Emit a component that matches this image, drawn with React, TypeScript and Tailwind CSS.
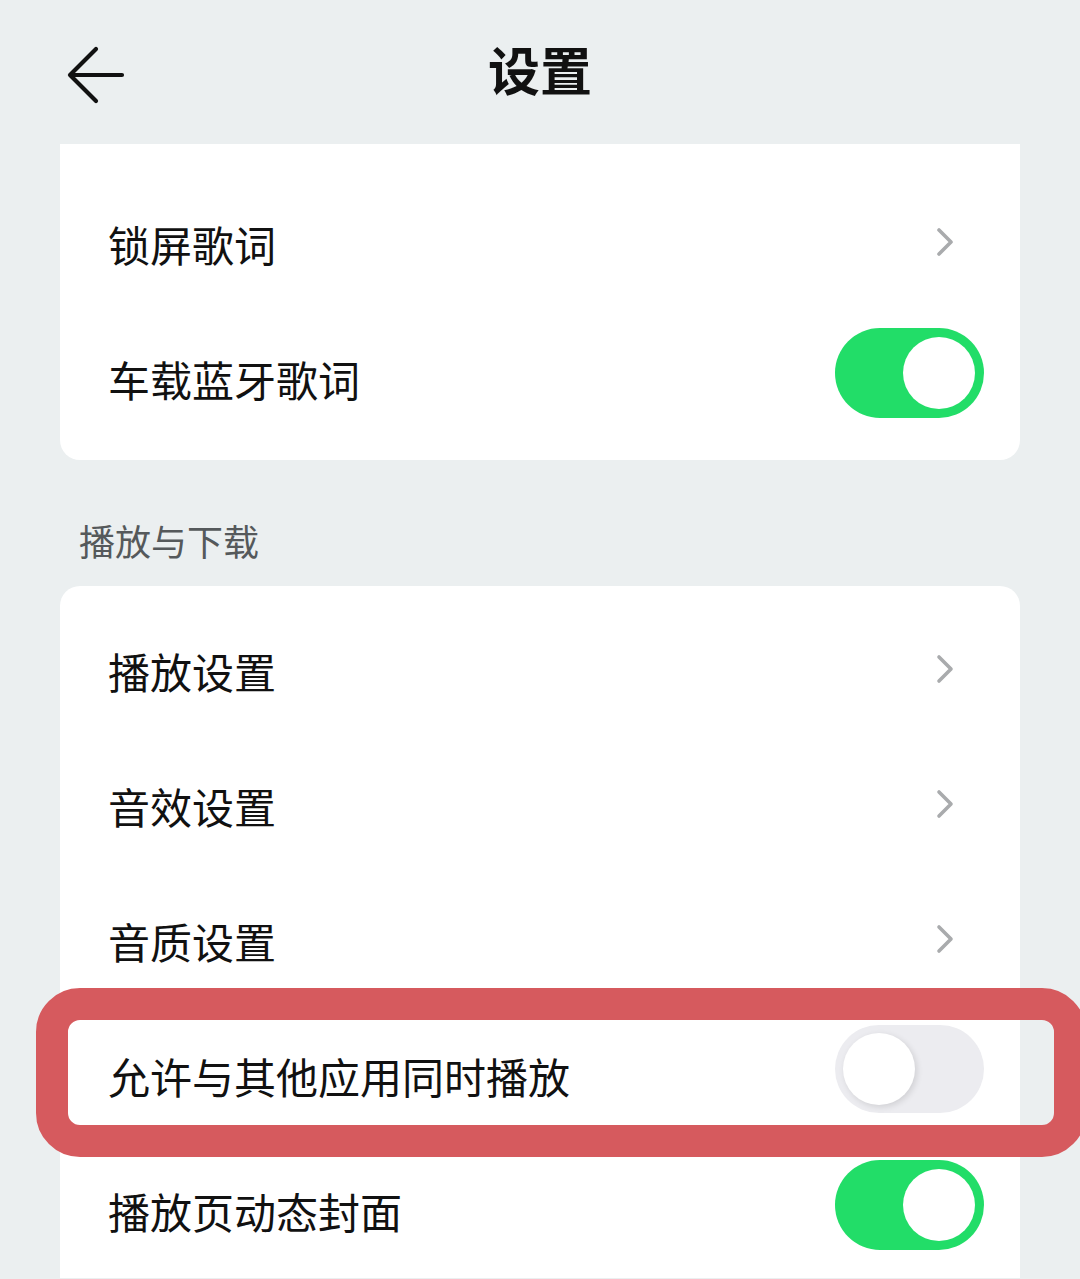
import { ReactNode } from 'react';

type RowProps = {
	label: string;
	right: ReactNode;
	children?: ReactNode;
};

function Chevron() {
	return (
		<svg width="18" height="30" viewBox="0 0 18 30" className="mr-[30px] mb-[3px]">
			<path
				d="M3 3 L15 15 L3 27"
				fill="none"
				stroke="#a9abad"
				strokeWidth="3.6"
				strokeLinecap="round"
				strokeLinejoin="round"
			/>
		</svg>
	);
}

function Toggle({ on }: { on: boolean }) {
	if (on) {
		return (
			<div className="w-[149px] h-[90px] mb-[12px] rounded-full bg-[#22dd68] flex items-center justify-end pr-[9px]">
				<div className="w-[72px] h-[72px] rounded-full bg-white" />
			</div>
		);
	}
	return (
		<div className="w-[149px] h-[88px] mb-[13px] rounded-full bg-[#ececf0] flex items-center justify-start pl-[8px]">
			<div className="w-[72px] h-[72px] rounded-full bg-white shadow-[2px_2px_6px_rgba(0,0,0,0.12)]" />
		</div>
	);
}

function Row({ label, right, children }: RowProps) {
	return (
		<div className="relative h-[135px] flex items-center justify-between pl-[48px] pr-[36px]">
			<span className="text-[42px] leading-none text-[#111]">{label}</span>
			{right}
			{children}
		</div>
	);
}

export default function App() {
	return (
		<div
			className="w-[1080px] h-[1279px] overflow-hidden bg-[#ebeff0]"
			style={{ fontFamily: '"Noto Sans CJK SC", "Noto Sans", sans-serif' }}
		>
			<header className="relative h-[144px] flex items-center justify-center">
				<svg
					width="60"
					height="58"
					viewBox="0 0 60 58"
					className="absolute left-[66px] top-[46px]"
				>
					<path
						d="M4 29 L56 29 M30 3 L4 29 L30 55"
						fill="none"
						stroke="#111"
						strokeWidth="4.2"
						strokeLinecap="round"
						strokeLinejoin="round"
					/>
				</svg>
				<h1 className="text-[52px] font-bold leading-none text-[#111] -mt-[6px]">设置</h1>
			</header>

			<div className="mx-[60px] bg-white rounded-b-[20px] pt-[32px] pb-[14px]">
				<Row label="锁屏歌词" right={<Chevron />} />
				<Row label="车载蓝牙歌词" right={<Toggle on />} />
			</div>

			<div className="pt-[60px] pb-[26px] pl-[79px] text-[36px] leading-[40px] text-[#55595b]">
				播放与下载
			</div>

			<div className="mx-[60px] bg-white rounded-t-[20px] pt-[17px]">
				<Row label="播放设置" right={<Chevron />} />
				<Row label="音效设置" right={<Chevron />} />
				<Row label="音质设置" right={<Chevron />} />
				<Row label="允许与其他应用同时播放" right={<Toggle on={false} />}>
					{/* highlight ring drawn over the row */}
					<div className="absolute left-[-24px] top-[-20px] w-[1050px] h-[169px] rounded-[44px] border-[32px] border-[#d65a5e] pointer-events-none" />
				</Row>
				<Row label="播放页动态封面" right={<Toggle on />} />
			</div>
		</div>
	);
}
